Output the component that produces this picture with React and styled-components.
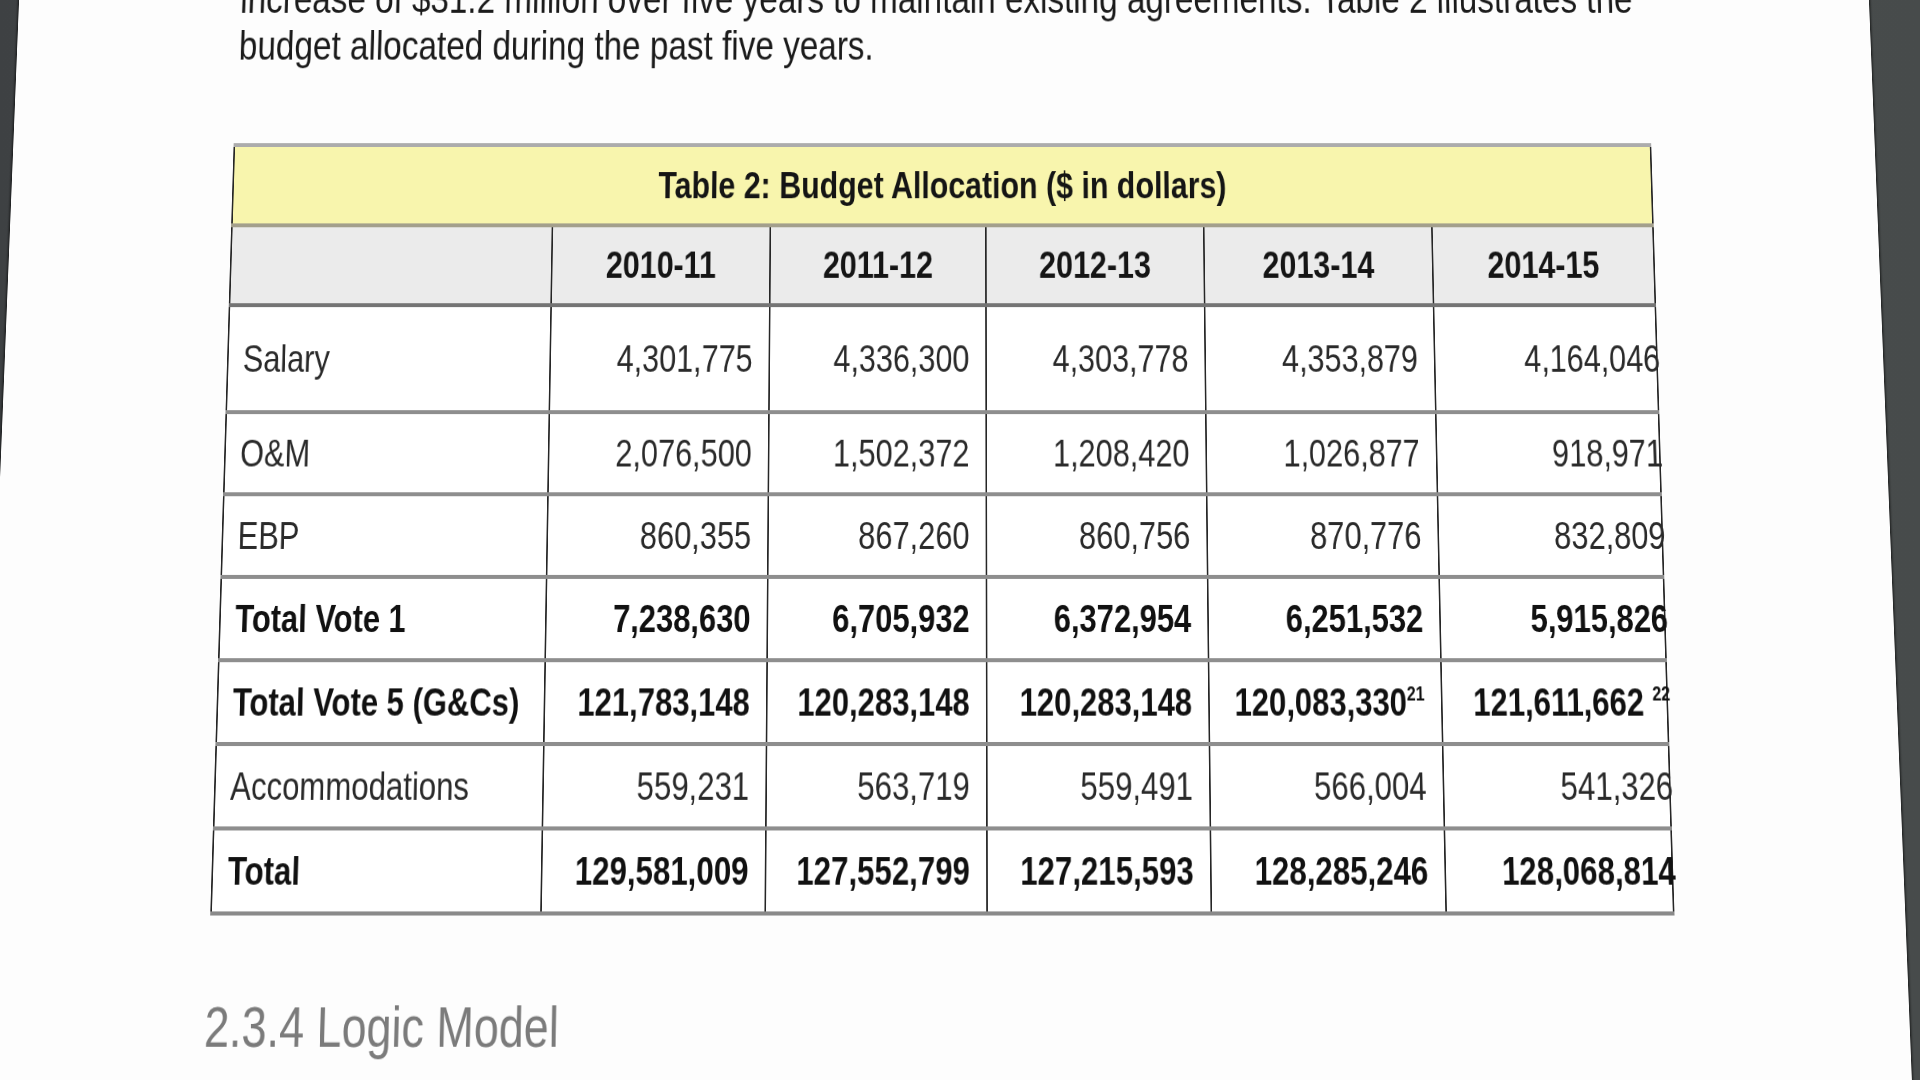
import React from "react";
import styled, { createGlobalStyle } from "styled-components";

const years = ["2010-11", "2011-12", "2012-13", "2013-14", "2014-15"];
const colWidths = [406, 276, 273, 276, 289, 280];

const rows = [
  { label: "Salary", tall: true, values: ["4,301,775", "4,336,300", "4,303,778", "4,353,879", "4,164,046"] },
  { label: "O&M", values: ["2,076,500", "1,502,372", "1,208,420", "1,026,877", "918,971"] },
  { label: "EBP", values: ["860,355", "867,260", "860,756", "870,776", "832,809"] },
  { label: "Total Vote 1", bold: true, values: ["7,238,630", "6,705,932", "6,372,954", "6,251,532", "5,915,826"] },
  {
    label: "Total Vote 5 (G&Cs)",
    bold: true,
    values: ["121,783,148", "120,283,148", "120,283,148", "120,083,330", "121,611,662"],
    notes: [null, null, null, "21", "22"],
  },
  { label: "Accommodations", values: ["559,231", "563,719", "559,491", "566,004", "541,326"] },
  { label: "Total", bold: true, values: ["129,581,009", "127,552,799", "127,215,593", "128,285,246", "128,068,814"] },
];

const App = () => {
  return (
    <>
      <GlobalStyle />
      <Screen>
        <Page>
          <Column>
            <Paragraph>
              increase of $31.2 million over five years to maintain existing agreements. Table 2 illustrates the
              budget allocated during the past five years.
            </Paragraph>

            <BudgetTable>
              <colgroup>
                {colWidths.map((w, i) => (
                  <col key={i} style={{ width: w }} />
                ))}
              </colgroup>
              <tbody>
                <TitleRow>
                  <TitleCell colSpan={6}>Table 2: Budget Allocation ($ in dollars)</TitleCell>
                </TitleRow>
                <HeadRow>
                  <HeadCell />
                  {years.map((y) => (
                    <HeadCell key={y}>{y}</HeadCell>
                  ))}
                </HeadRow>
                {rows.map((row) => (
                  <DataRow key={row.label} $tall={row.tall}>
                    <LabelCell $bold={row.bold}>{row.label}</LabelCell>
                    {row.values.map((v, i) => (
                      <NumCell key={i} $bold={row.bold} $last={i === 4}>
                        <NumText $last={i === 4}>
                          {v}
                          {row.notes && row.notes[i] && (
                            <>
                              {i === 4 ? " " : ""}
                              <Note>{row.notes[i]}</Note>
                            </>
                          )}
                        </NumText>
                      </NumCell>
                    ))}
                  </DataRow>
                ))}
              </tbody>
            </BudgetTable>

            <Heading>2.3.4 Logic Model</Heading>
          </Column>
        </Page>
      </Screen>
    </>
  );
};

const GlobalStyle = createGlobalStyle`
  html, body {
    margin: 0;
    padding: 0;
    overflow: hidden;
    background: #4a4d4f;
  }
`;

const Screen = styled.div`
  width: 1920px;
  height: 1080px;
  overflow: hidden;
  display: flex;
  justify-content: center;
  align-items: flex-start;
  background: linear-gradient(90deg, #3e4143 0%, #4b4f51 50%, #474b4b 100%);
`;

const Page = styled.div`
  flex-shrink: 0;
  width: 2366px;
  height: 1240px;
  margin-top: -60px;
  padding-top: 20px;
  box-sizing: border-box;
  background: #fdfdfd;
  box-shadow: 0 0 3px 1px rgba(0, 0, 0, 0.75);
  transform-origin: 50% 600px;
  transform: translateX(-16px) perspective(2000px) rotateX(4.8deg) scaleX(0.8);
  filter: blur(0.4px);
  font-family: "Liberation Sans", Arial, sans-serif;
  color: #1b1b1b;
  display: flex;
  flex-direction: column;
  align-items: center;
`;

const Column = styled.div`
  width: 1800px;
  display: flex;
  flex-direction: column;
`;

const Paragraph = styled.p`
  margin: 0;
  font-size: 42.5px;
  line-height: 49px;
  text-align: left;
`;

const BudgetTable = styled.table`
  margin: 77px 0 0 -3px;
  width: 1800px;
  table-layout: fixed;
  border-collapse: collapse;
  border-top: 4px solid #acacac;
  border-bottom: 4px solid #8a8a8a;
  font-size: 38.5px;
`;

const TitleRow = styled.tr`
  height: 83px;
  background: #f8f5ad;
`;

const TitleCell = styled.td`
  text-align: center;
  font-weight: 700;
  color: #151515;
  border-left: 2px solid #262626;
  border-right: 2px solid #262626;
`;

const HeadRow = styled.tr`
  height: 82px;
  background: #ebebeb;
  border-top: 4px solid #a39f8c;
`;

const HeadCell = styled.td`
  text-align: center;
  font-weight: 700;
  color: #151515;
  border-left: 2px solid #262626;
  border-right: 2px solid #262626;
`;

const DataRow = styled.tr`
  height: ${(p) => (p.$tall ? 109 : 83)}px;
  background: #ffffff;
  border-top: 4px solid ${(p) => (p.$tall ? "#747474" : "#8e8e8e")};
`;

const LabelCell = styled.td`
  padding: 0 0 0 18px;
  text-align: left;
  white-space: nowrap;
  font-weight: ${(p) => (p.$bold ? 700 : 400)};
  color: ${(p) => (p.$bold ? "#111" : "#2a2a2a")};
  border-left: 2px solid #262626;
  border-right: 2px solid #262626;
`;

const NumCell = styled.td`
  padding: 0 ${(p) => (p.$last ? 0 : 20)}px 0 0;
  text-align: right;
  white-space: nowrap;
  overflow: visible;
  font-weight: ${(p) => (p.$bold ? 700 : 400)};
  color: ${(p) => (p.$bold ? "#111" : "#2a2a2a")};
  border-left: 2px solid #262626;
  border-right: 2px solid #262626;
`;

const NumText = styled.span`
  display: inline-block;
  margin-right: ${(p) => (p.$last ? -5 : 0)}px;
`;

const Note = styled.sup`
  font-size: 20px;
  vertical-align: 15px;
  line-height: 0;
`;

const Heading = styled.h2`
  margin: 77px 0 0 -6px;
  font-size: 55px;
  font-weight: 400;
  line-height: 1.15;
  color: #7b7b7b;
`;

export default App;
